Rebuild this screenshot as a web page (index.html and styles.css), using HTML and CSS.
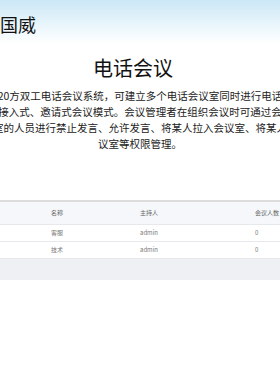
FILE: index.html
```html
<!DOCTYPE html>
<html>
<head>
<meta name="viewport" content="width=device-width, initial-scale=1">
<link rel="stylesheet" href="styles.css">
</head>
<body>

<div class="topbar">
  <span class="brand">国威</span>
</div>

<div class="intro">
  <div class="intro-inner">
    <h1 class="title">电话会议</h1>
    <p class="desc">
      <span class="line">20方双工电话会议系统，可建立多个电话会议室同时进行电话</span>
      <span class="line">直接入式、邀请式会议模式。会议管理者在组织会议时可通过会控</span>
      <span class="line">对会议室的人员进行禁止发言、允许发言、将某人拉入会议室、将某人踢出会</span>
      <span class="line">议室等权限管理。</span>
    </p>
  </div>
</div>

<div class="list">
  <table class="grid">
    <tr class="head">
      <th class="c-id"></th>
      <th class="c-name">名称</th>
      <th class="c-host">主持人</th>
      <th class="c-num">会议人数</th>
    </tr>
    <tr>
      <td></td>
      <td>客服</td>
      <td>admin</td>
      <td>0</td>
    </tr>
    <tr>
      <td></td>
      <td>技术</td>
      <td>admin</td>
      <td>0</td>
    </tr>
  </table>
  <div class="list-foot"></div>
</div>

</body>
</html>
```

FILE: styles.css
```css
* {box-sizing: border-box}

body, html {
  margin: 0;
  font-family: "Noto Sans CJK SC", "Noto Sans", sans-serif;
  background: #fff;
  overflow: hidden;
}

/* header with the blue fade */
.topbar {
  height: 44px;
  padding-top: 12px;
  background: linear-gradient(#cbe7f6, #e6f4fb 22px, #fff 44px);
}

.brand {
  font-size: 18px;
  line-height: 24px;
  color: #111;
}

/* centred intro, wider than the window */
.intro {
  display: flex;
  justify-content: center;
}

.intro-inner {
  flex: 0 0 auto;
  width: 380px;
  text-align: center;
}

.title {
  margin: 10px 0 0;
  padding-right: 14px;
  font-size: 20px;
  font-weight: normal;
  line-height: 28px;
  color: #111;
}

.desc {
  margin: 6px 0 0;
  font-size: 10.5px;
  line-height: 16px;
  color: #222;
}

.desc .line {
  display: block;
  white-space: nowrap;
}

/* conference table */
.list {
  margin-top: 48px;
  border-top: 2px solid #dcdcdc;
}

.grid {
  width: 100%;
  border-collapse: collapse;
  table-layout: fixed;
  font-size: 6px;
  color: #777;
}

.grid th, .grid td {
  text-align: left;
  font-weight: normal;
  padding: 0 0 0 6px;
  height: 17px;
  border-bottom: 1px solid #e6e8eb;
  white-space: nowrap;
}

.grid .head th {
  height: 22px;
  background: #f5f7fa;
  color: #666;
}

.c-id {width: 45px}
.c-name {width: 89px}
.c-host {width: 115px}

.list-foot {
  height: 21px;
  background: #eef0f3;
}
```
